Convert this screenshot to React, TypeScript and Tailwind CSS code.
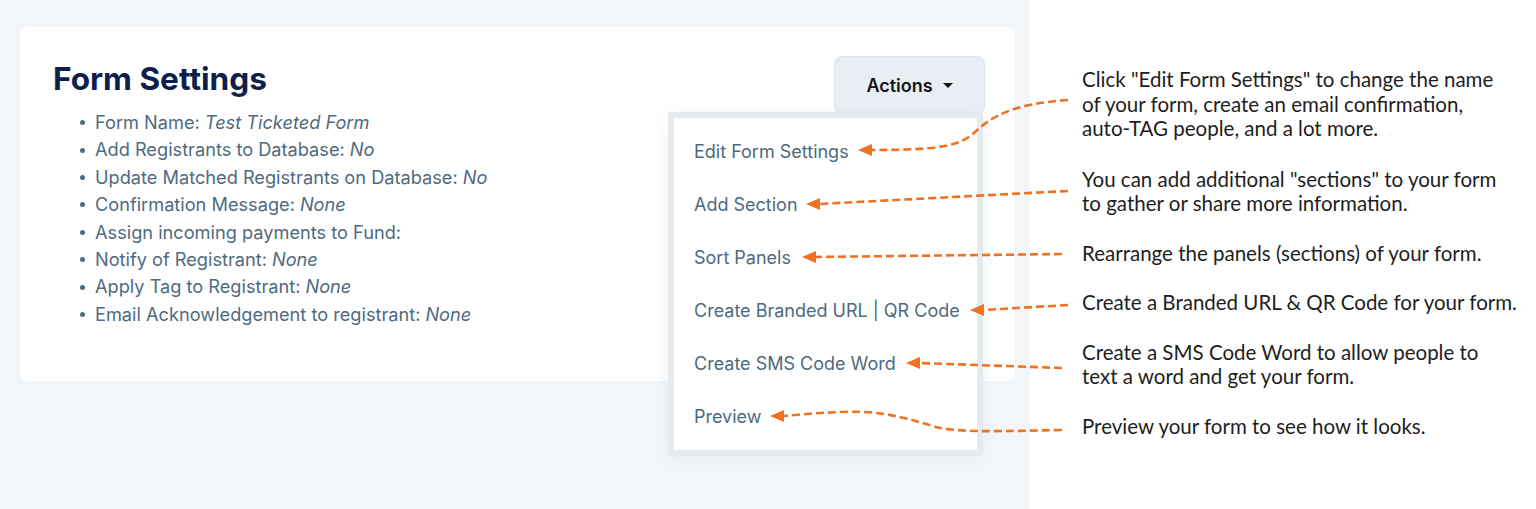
import React from 'react'

const settings: { label: string; value?: string }[] = [
  { label: 'Form Name:', value: 'Test Ticketed Form' },
  { label: 'Add Registrants to Database:', value: 'No' },
  { label: 'Update Matched Registrants on Database:', value: 'No' },
  { label: 'Confirmation Message:', value: 'None' },
  { label: 'Assign incoming payments to Fund:' },
  { label: 'Notify of Registrant:', value: 'None' },
  { label: 'Apply Tag to Registrant:', value: 'None' },
  { label: 'Email Acknowledgement to registrant:', value: 'None' },
]

const menuItems = [
  'Edit Form Settings',
  'Add Section',
  'Sort Panels',
  'Create Branded URL | QR Code',
  'Create SMS Code Word',
  'Preview',
]

const notes: { lines: string[]; mt: string }[] = [
  { lines: ['Click "Edit Form Settings" to change the name', 'of your form, create an email confirmation,', 'auto-TAG people, and a lot more.'], mt: 'mt-[67px]' },
  { lines: ['You can add additional "sections" to your form', 'to gather or share more information.'], mt: 'mt-[26px]' },
  { lines: ['Rearrange the panels (sections) of your form.'], mt: 'mt-[25px]' },
  { lines: ['Create a Branded URL & QR Code for your form.'], mt: 'mt-[25px]' },
  { lines: ['Create a SMS Code Word to allow people to', 'text a word and get your form.'], mt: 'mt-[25px]' },
  { lines: ['Preview your form to see how it looks.'], mt: 'mt-[25px]' },
]

const Arrows = () => (
  <svg className="pointer-events-none absolute inset-0 z-20" width="1536" height="509" viewBox="0 0 1536 509">
    <g fill="none" stroke="#f07122" strokeWidth="2.6" strokeDasharray="8 4">
      <path d="M1068 100 C1010 104, 990 118, 975 132 C960 146, 940 150, 872 150" />
      <path d="M1068 191 L819 204" />
      <path d="M1062 254 L815 257" />
      <path d="M1068 305 L983 310" />
      <path d="M1062 368 L919 363" />
      <path d="M1062 430 C1000 431, 962 433, 936 427 C906 418, 880 410, 842 412 C812 413, 796 415, 784 416" />
    </g>
    <g fill="#f07122">
      <polygon points="858,150 872,144 872,156" />
      <polygon points="806,204 820,198 820,210" />
      <polygon points="802,257 816,251 816,263" />
      <polygon points="970,310 984,304 984,316" />
      <polygon points="906,363 920,357 920,369" />
      <polygon points="770,416 784,410 784,422" />
    </g>
  </svg>
)

export default function App() {
  return (
    <div className="relative flex h-[509px] w-[1536px] overflow-hidden bg-white font-['Inter',sans-serif]">
      <div className="h-full w-[1030px] shrink-0 bg-[#f3f6f9] px-[20px] pt-[27px]">
        <div className="h-[354px] w-[995px] rounded-lg bg-white pl-[33px] pr-[30px] pt-[29px] shadow-[0_0_2px_rgba(0,0,0,0.03)]">
          <div className="flex items-start justify-between">
            <h2 className="mt-[5px] text-[31.6px] font-bold leading-[36px] text-[#0e1f4b]">Form Settings</h2>
            <div className="relative">
              <button className="flex h-[58px] w-[151px] items-center justify-center gap-[10px] rounded-lg border border-[#dde3ea] bg-[#e9eef4] text-[18px] font-semibold text-[#141414]">
                Actions
                <span className="mt-[1px] h-0 w-0 border-x-[5px] border-t-[5px] border-x-transparent border-t-[#141414]" />
              </button>
              <div className="absolute right-[2px] top-[56px] z-10 w-[315px] border-[6px] border-[#e5eaef] bg-white pb-[7px] pl-[20px] pt-[7px] shadow-[0_4px_18px_rgba(30,50,80,0.06)]">
                {menuItems.map((m) => (
                  <div key={m} className="flex h-[53px] items-center text-[18px] leading-none text-[#4d6a80]">
                    {m}
                  </div>
                ))}
              </div>
            </div>
          </div>
          <ul className="-mt-[5px] pl-[27px]">
            {settings.map((s) => (
              <li key={s.label} className="flex h-[27.4px] items-center text-[18.2px] text-[#4f6a80]">
                <span className="mr-[10px] h-[5px] w-[5px] rounded-full bg-[#4f6a80]" />
                <span>{s.label}</span>
                {s.value && <span className="ml-[5px] italic">{s.value}</span>}
              </li>
            ))}
          </ul>
        </div>
      </div>
      <div className="flex flex-col pl-[52px] font-['Lato',sans-serif] text-[20.5px] leading-[24.5px] text-[#1e1e1e]">
        {notes.map((n, i) => (
          <div key={i} className={n.mt + ' whitespace-nowrap'}>
            {n.lines.map((l) => (
              <div key={l}>{l}</div>
            ))}
          </div>
        ))}
      </div>
      <Arrows />
    </div>
  )
}
